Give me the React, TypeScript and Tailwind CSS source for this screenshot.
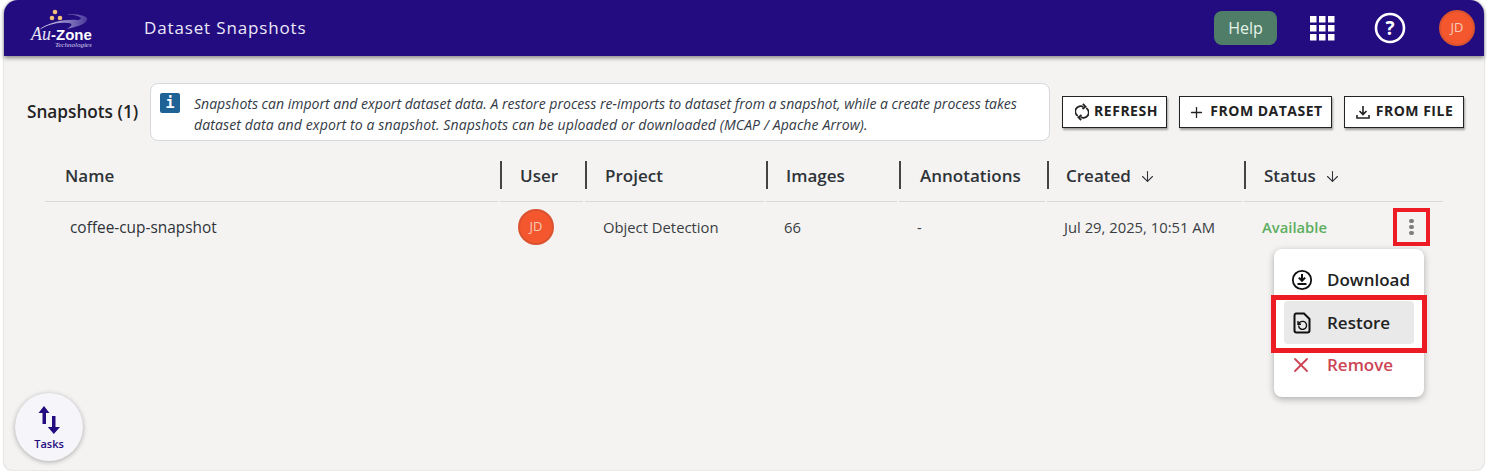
import React from "react";
import { ArrowDown, Plus, X } from "lucide-react";

const font = { fontFamily: '"Open Sans", "Noto Sans", sans-serif' };

const columns = [
  { label: "Name", width: "w-[455px]", pad: "pl-5" },
  { label: "User", width: "w-[85px]", pad: "pl-[18px]" },
  { label: "Project", width: "w-[181px]", pad: "pl-[18px]" },
  { label: "Images", width: "w-[133px]", pad: "pl-[18px]" },
  { label: "Annotations", width: "w-[148px]", pad: "pl-[19px]" },
  { label: "Created", width: "w-[197px]", pad: "pl-[17px]", sort: true },
  { label: "Status", width: "w-[201px]", pad: "pl-[18px]", sort: true },
];

function Avatar() {
  return (
    <div className="w-9 h-9 rounded-full bg-[#f4572e] border-2 border-[#d9532f] flex items-center justify-center text-[13px] text-[#f6c9b8]">
      JD
    </div>
  );
}

function Logo() {
  return (
    <div className="relative w-[70px] h-[44px] text-white">
      <svg className="absolute left-[8px] top-[1px]" width="62" height="30" viewBox="0 0 62 30">
        <defs>
          <linearGradient id="swoosh" x1="0" x2="1" y1="0" y2="0">
            <stop offset="0" stopColor="#e0ddf2" />
            <stop offset="1" stopColor="#4a3a9c" />
          </linearGradient>
        </defs>
        <path d="M2 23 C10 15 30 12 40 13 C46 13 47 9 30 7 C38 7 52 8 50 13 C48 18 38 20 30 22 C36 18 36 16 30 16 C20 15 10 18 2 23 Z" fill="url(#swoosh)" />
        <circle cx="18" cy="5" r="2.3" fill="#f3c27a" />
        <circle cx="15" cy="11" r="2.3" fill="#f3c27a" />
        <circle cx="23" cy="11" r="2.3" fill="#f3c27a" />
      </svg>
      <div className="absolute left-[2px] top-[20px] flex items-baseline leading-[16px] whitespace-nowrap">
        <span className="italic text-[18px] text-[#e8e6f6]" style={{ fontFamily: '"Liberation Serif", serif' }}>Au</span>
        <span className="text-[15px] font-bold" style={{ fontFamily: '"Liberation Sans", sans-serif' }}>-Zone</span>
      </div>
      <div className="absolute left-[26px] top-[36px] italic text-[7px] leading-none text-[#d8d5ee]" style={{ fontFamily: '"Liberation Serif", serif' }}>
        Technologies
      </div>
    </div>
  );
}

function ActionButton({ icon, label, width }: { icon: React.ReactNode; label: string; width: string }) {
  return (
    <button className={`${width} h-8 bg-white border border-[#222] shadow-[1px_2px_2px_rgba(0,0,0,0.35)] flex items-center justify-center gap-[5px] text-[14px] font-bold tracking-[0.5px] text-[#222]`}>
      {icon}
      <span className="-mt-[3px]">{label}</span>
    </button>
  );
}

export default function App() {
  return (
    <div className="w-[1487px] h-[471px] bg-white overflow-hidden px-[4px]" style={font}>
      <div className="relative w-[1480px] h-[470px] bg-[#f4f3f2] rounded-t-[14px] rounded-b-[8px] shadow-[0_0_2px_rgba(0,0,0,0.35)]">
        {/* App bar */}
        <header className="h-[56px] bg-[#230c80] rounded-t-[14px] shadow-[0_2px_4px_rgba(0,0,0,0.45)] flex items-center pl-[25px] pr-[9px]">
          <Logo />
          <h1 className="ml-[45px] text-[17px] font-medium tracking-[0.85px] text-[#ece9f8]">Dataset Snapshots</h1>
          <button className="ml-auto w-[63px] h-[34px] rounded-[8px] bg-[#4f7d68] text-[16px] text-[#e6f3ea]">Help</button>
          <svg className="ml-[33px]" width="25" height="25" viewBox="0 0 25 25" fill="#fff">
            {[0, 9, 18].map((y) =>
              [0, 9, 18].map((x) => <rect key={`${x}-${y}`} x={x} y={y} width="6.5" height="6.5" />)
            )}
          </svg>
          <svg className="ml-[39px]" width="32" height="32" viewBox="0 0 32 32" fill="none">
            <circle cx="16" cy="16" r="14" stroke="#fff" strokeWidth="2.6" />
            <text x="16" y="22.5" textAnchor="middle" fontSize="19" fontWeight="700" fill="#fff">?</text>
          </svg>
          <div className="ml-[33px]">
            <Avatar />
          </div>
        </header>

        {/* Toolbar */}
        <div className="flex items-center mt-[27px] pl-[23px]">
          <div className="w-[123px] text-[17.2px] font-semibold text-[#222] whitespace-nowrap">Snapshots (1)</div>
          <div className="w-[900px] h-[58px] bg-white border border-[#d6d8dc] rounded-[8px] flex pl-[9px] pt-[9px]">
            <div className="w-5 h-5 rounded-[2px] bg-[#1f6396] text-white text-[15px] font-bold leading-5 text-center shrink-0" style={{ fontFamily: '"DejaVu Sans Mono", monospace' }}>i</div>
            <p className="ml-[14px] text-[14.05px] italic leading-[21px] text-[#333a45]">
              <span className="block">Snapshots can import and export dataset data. A restore process re-imports to dataset from a snapshot, while a create process takes</span>
              <span className="block tracking-[0.1px]">dataset data and export to a snapshot. Snapshots can be uploaded or downloaded (MCAP / Apache Arrow).</span>
            </p>
          </div>
          <div className="flex gap-[12px] ml-[12px]">
            <ActionButton
              width="w-[105px] pl-1"
              label="REFRESH"
              icon={
                <svg width="14" height="18" viewBox="0 0 16 20" fill="none" stroke="#222" strokeWidth="2">
                  <path d="M3.2 14.5A6 6 0 0 1 9.5 4.2" />
                  <path d="M12.8 5.5A6 6 0 0 1 6.5 15.8" />
                  <path d="M9 .8 12 4 8.6 6.6" />
                  <path d="M7 19.2 4 16l3.4-2.6" />
                </svg>
              }
            />
            <ActionButton width="w-[153px]" label="FROM DATASET" icon={<Plus size={17} strokeWidth={1.8} />} />
            <ActionButton
              width="w-[120px]"
              label="FROM FILE"
              icon={
                <svg width="16" height="16" viewBox="0 0 16 16" fill="none" stroke="#222" strokeWidth="1.6">
                  <path d="M8 2v8M4.5 7 8 10.5 11.5 7M2 11v3h12v-3" />
                </svg>
              }
            />
          </div>
        </div>

        {/* Table */}
        <div className="ml-[41px] mt-[13px] w-[1400px]">
          <div className="flex h-[48px]">
            {columns.map((c, i) => (
              <div key={c.label} className={`${c.width} pt-[7px] pr-[2px]`}>
                <div className="h-[41px] border-b border-[#d9d9d9]">
                  <div className={`${c.pad} h-[28px] pt-[2px] flex items-center gap-2 text-[17px] font-semibold text-[#2f3338] whitespace-nowrap ${i > 0 ? "border-l-2 border-[#444]" : ""}`}>
                    {c.label}
                    {c.sort && <ArrowDown size={17} strokeWidth={1.5} />}
                  </div>
                </div>
              </div>
            ))}
          </div>
          <div className="flex h-[50px] items-center text-[14.8px] text-[#3a3d42]">
            <div className="w-[456px] pl-[25px] pt-[1px] text-[15.4px] text-[#2f3338]">coffee-cup-snapshot</div>
            <div className="w-[85px] pl-[17px]">
              <Avatar />
            </div>
            <div className="w-[181px] pl-[17px]">Object Detection</div>
            <div className="w-[133px] pl-[17px]">66</div>
            <div className="w-[148px] pl-[17px]">-</div>
            <div className="w-[197px] pl-[16px]">Jul 29, 2025, 10:51 AM</div>
            <div className="w-[198px] pl-[17px] font-semibold text-[#5cae5f]">Available</div>
          </div>
        </div>

        {/* Row menu trigger, highlighted in red */}
        <div className="absolute left-[1389px] top-[208px] w-[37px] h-[38px] border-[4px] border-[#ed1c24] flex flex-col items-center justify-center gap-[1.5px]">
          <span className="w-[4.5px] h-[4.5px] rounded-full bg-[#7d7d7d]" />
          <span className="w-[4.5px] h-[4.5px] rounded-full bg-[#7d7d7d]" />
          <span className="w-[4.5px] h-[4.5px] rounded-full bg-[#7d7d7d]" />
        </div>

        {/* Row menu */}
        <div className="absolute left-[1270px] top-[249px] w-[150px] h-[148px] bg-white rounded-[8px] shadow-[0_2px_7px_rgba(0,0,0,0.3)] px-[10px] pt-[9px] text-[17px] font-semibold">
          <div className="h-[43px] flex items-center pl-[7px] text-[#222]">
            <svg width="22" height="22" viewBox="0 0 22 22" fill="none" stroke="#111" strokeWidth="1.8">
              <circle cx="11" cy="11" r="9.2" />
              <path d="M11 5v6M7.8 8.6 11 11.8l3.2-3.2" strokeWidth="2" />
              <path d="M6.5 15h9" strokeWidth="2" />
            </svg>
            <span className="ml-[14px]">Download</span>
          </div>
          <div className="h-[43px] flex items-center pl-[9px] rounded-[4px] bg-[#e9e9e9] text-[#222]">
            <svg width="18" height="22" viewBox="0 0 18 22" fill="none" stroke="#111" strokeWidth="2">
              <path d="M3 1.5h8L16.5 7v11.5a2 2 0 0 1-2 2h-11a2 2 0 0 1-2-2v-15a2 2 0 0 1 1.5-2Z" />
              <path d="M5.6 13.5a4 4 0 1 0 1.4-3.2L5.2 12M5 9v3.2h3" strokeWidth="1.4" />
            </svg>
            <span className="ml-[16px]">Restore</span>
          </div>
          <div className="h-[42px] flex items-center pl-[5px] text-[#cc4455]">
            <X size={24} strokeWidth={1.8} />
            <span className="ml-[14px]">Remove</span>
          </div>
        </div>

        {/* Restore highlight */}
        <div className="absolute left-[1267px] top-[295px] w-[156px] h-[58px] border-[5px] border-[#ed1c24]" />

        {/* Tasks button */}
        <button className="absolute left-[11px] top-[393px] w-[68px] h-[68px] rounded-full bg-[#f5f5fa] shadow-[0_1px_5px_rgba(0,0,0,0.3)] flex flex-col items-center justify-center text-[#230c80]">
          <svg width="24" height="28" viewBox="0 0 24 28" fill="#230c80">
            <path d="M7 0 12.5 7H9v11H5.5V7H1.5ZM15 10h3.5v11H23l-6.2 7-6-7H15Z" />
          </svg>
          <span className="text-[11px] font-semibold mt-[4px] leading-none">Tasks</span>
        </button>
      </div>
    </div>
  );
}
